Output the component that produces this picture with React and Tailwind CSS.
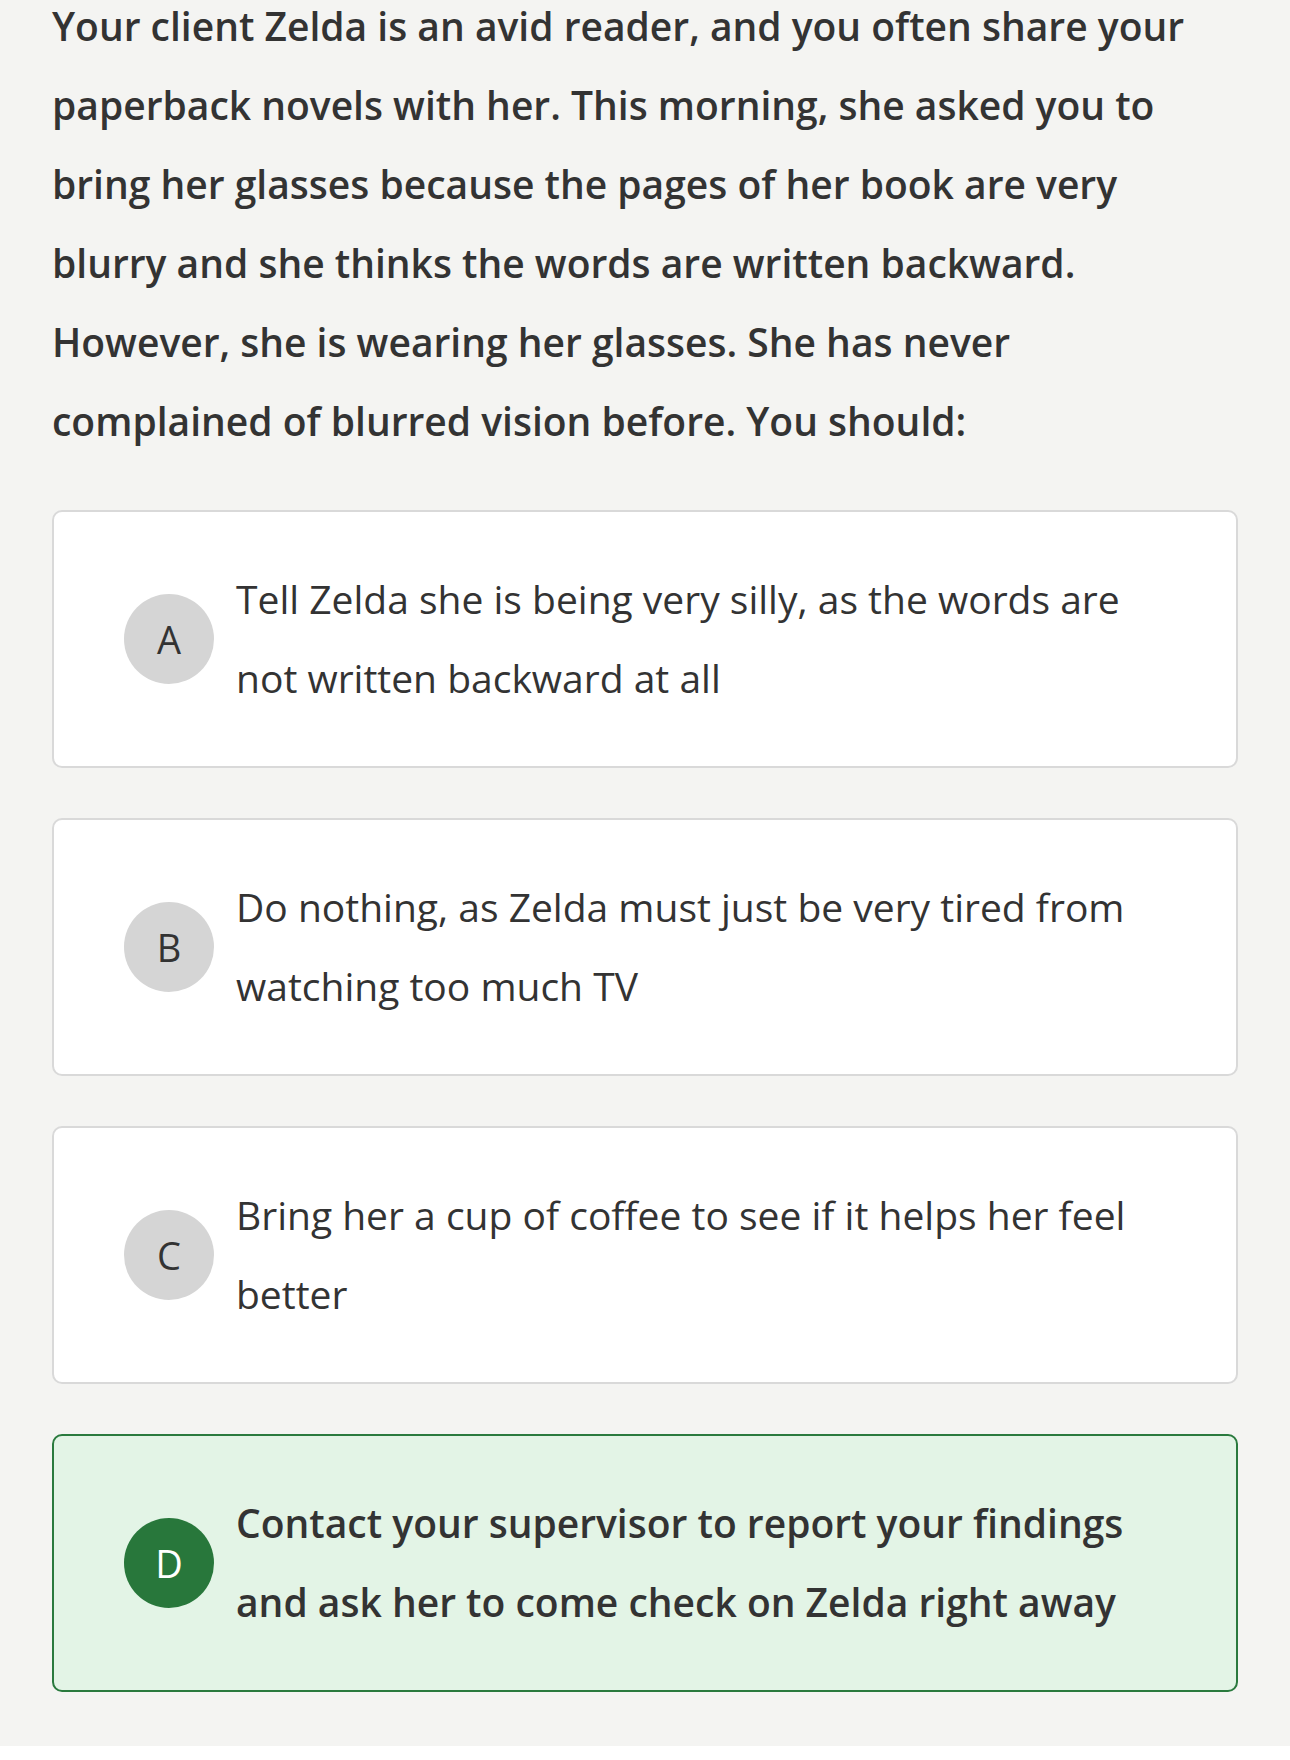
import React from 'react';

const options = [
  { id: 'A', text: 'Tell Zelda she is being very silly, as the words are not written backward at all' },
  { id: 'B', text: 'Do nothing, as Zelda must just be very tired from watching too much TV' },
  { id: 'C', text: 'Bring her a cup of coffee to see if it helps her feel better' },
  { id: 'D', text: 'Contact your supervisor to report your findings and ask her to come check on Zelda right away', correct: true },
];

const Option = ({ id, text, correct }) => (
  <div
    className={
      'flex items-center h-[258px] rounded-[10px] border-2 pl-[70px] pr-[78px] ' +
      (correct ? 'bg-[#e3f4e6] border-[#2a7a3e]' : 'bg-white border-[#d9d9d9]')
    }
  >
    <div
      className={
        'flex shrink-0 items-center justify-center w-[90px] h-[90px] rounded-full text-[38px] ' +
        (correct ? 'bg-[#28773b] text-white' : 'bg-[#d5d5d5] text-[#333]')
      }
    >
      {id}
    </div>
    <p className={'ml-[22px] -mt-[3px] text-[39px] leading-[79px] text-[#333] ' + (correct ? 'font-semibold' : '')}>
      {text}
    </p>
  </div>
);

export default function App() {
  return (
    <div className="min-h-[1760px] bg-[#f4f4f2] px-[52px] font-['Open_Sans',sans-serif]">
      <p className="-mt-[14px] pr-[10px] text-[39px] leading-[79px] font-semibold text-[#333]">
        Your client Zelda is an avid reader, and you often share your paperback novels with her. This morning,
        she asked you to bring her glasses because the pages of her book are very blurry and she thinks the words
        are written backward. However, she is wearing her glasses. She has never complained of blurred vision
        before. You should:
      </p>

      {/* Answer choices */}
      <div className="mt-[50px] flex flex-col gap-[50px]">
        {options.map((o) => (
          <Option key={o.id} {...o} />
        ))}
      </div>
    </div>
  );
}
